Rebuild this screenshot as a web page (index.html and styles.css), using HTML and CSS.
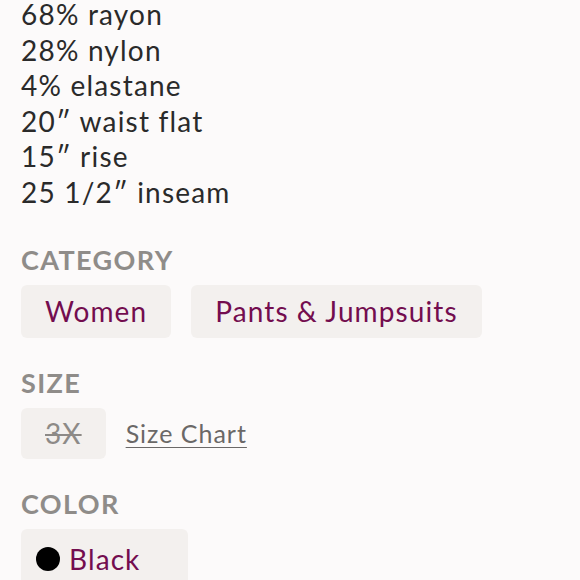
FILE: index.html
```html
<!DOCTYPE html>
<html>
<head>
<meta charset="utf-8">
<link rel="stylesheet" href="styles.css">
</head>
<body>
<div class="page">
  <div class="desc">
    <div>68% rayon</div>
    <div>28% nylon</div>
    <div>4% elastane</div>
    <div>20″ waist flat</div>
    <div>15″ rise</div>
    <div>25 1/2″ inseam</div>
  </div>

  <section class="group">
    <h2 class="label">CATEGORY</h2>
    <div class="chips">
      <span class="chip">Women</span>
      <span class="chip">Pants &amp; Jumpsuits</span>
    </div>
  </section>

  <section class="group">
    <h2 class="label">SIZE</h2>
    <div class="chips">
      <span class="chip chip-size"><s>3X</s></span>
      <a class="size-chart">Size Chart</a>
    </div>
  </section>

  <section class="group">
    <h2 class="label">COLOR</h2>
    <div class="chips">
      <span class="chip chip-color"><span class="dot"></span>Black</span>
    </div>
  </section>
</div>
</body>
</html>
```

FILE: styles.css
```css
html, body {
  margin: 0;
  padding: 0;
  background: #fcfafa;
}
body {
  font-family: "Lato", "Noto Sans", sans-serif;
  color: #2b2b2b;
}
.page {
  padding: 0 21px;
  margin-top: -3px;
}
.desc {
  font-size: 28px;
  line-height: 35.6px;
  letter-spacing: 1.2px;
  color: #2a2a2a;
}
.desc + .group {
  margin-top: 32px;
}
.label {
  margin: 0;
  font-size: 27px;
  font-weight: 700;
  letter-spacing: 1.4px;
  color: #8f8c89;
  line-height: 34px;
}
.chips {
  display: flex;
  align-items: center;
  gap: 20px;
  margin-top: 8px;
  margin-bottom: 28px;
}
.chip {
  display: inline-flex;
  align-items: center;
  height: 53px;
  padding: 0 24px;
  border-radius: 6px;
  background: #f3f0ee;
  color: #730d4f;
  font-size: 28px;
  letter-spacing: 1.1px;
}
.chip-size {
  height: 51px;
  color: #8d8a87;
  padding: 0 24px;
}
.chip-size s {
  text-decoration-thickness: 2px;
}
.size-chart {
  color: #6b6867;
  font-size: 25px;
  letter-spacing: 1px;
  text-decoration: underline;
  text-underline-offset: 4px;
  text-decoration-thickness: 1px;
}
.chip-color {
  padding: 0 48px 0 15px;
  height: 60px;
  border-radius: 6px 6px 0 0;
}
.dot {
  width: 24px;
  height: 24px;
  border-radius: 50%;
  background: #000;
  margin-right: 9px;
}
```
